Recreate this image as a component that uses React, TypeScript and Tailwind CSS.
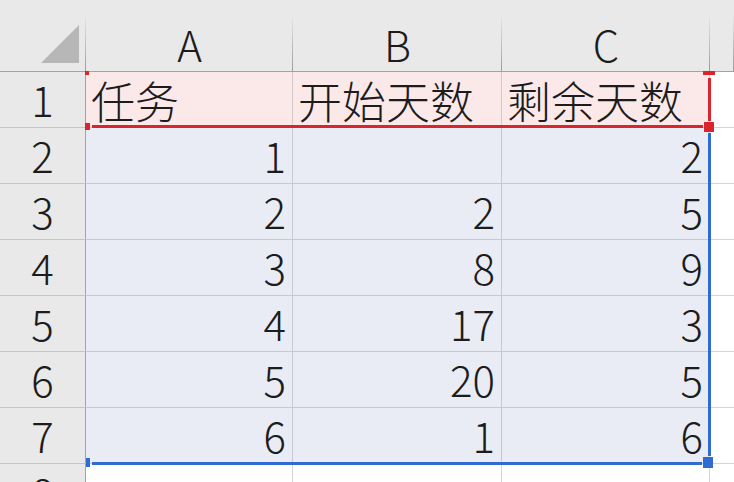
const font = '"Noto Sans CJK SC", "Noto Sans", sans-serif';

const letters = ["A", "B", "C"];
const titles = ["任务", "开始天数", "剩余天数"];
const rows: (number | null)[][] = [
  [1, null, 2],
  [2, 2, 5],
  [3, 8, 9],
  [4, 17, 3],
  [5, 20, 5],
  [6, 1, 6],
];

const HeadSep = () => (
  <span className="absolute right-0 top-[14px] bottom-0 w-px bg-gradient-to-b from-[#e9e9e9] to-[#9c9c9c]" />
);

export default function App() {
  return (
    <div
      className="relative w-[734px] h-[482px] overflow-hidden bg-white text-[#1c1c1c] font-light"
      style={{ fontFamily: font }}
    >
      <div className="grid grid-cols-[86px_207px_209px_208px_1fr] grid-rows-[72px_repeat(7,56px)_1fr] h-full">
        {/* corner */}
        <div className="relative flex items-end justify-end pr-[7px] pb-[8px] bg-[#e9e9e9] border-b border-[#a3a3a3]">
          <svg width="38" height="38" viewBox="0 0 38 38">
            <polygon points="0,38 38,38 38,0" fill="#b7b7b7" />
          </svg>
          <HeadSep />
        </div>
        {letters.map((l) => (
          <div
            key={l}
            className="relative flex items-end justify-center pb-[6px] bg-[#e9e9e9] border-b border-[#a3a3a3] text-[42px] leading-none"
          >
            {l}
            <HeadSep />
          </div>
        ))}
        <div className="relative bg-[#e9e9e9] border-b border-[#a3a3a3]">
          <HeadSep />
        </div>

        {/* row 1 */}
        <div className="flex items-end justify-center pb-[7px] bg-[#e9e9e9] border-r border-b border-r-[#a3a3a3] border-b-[#c4c4c4] text-[42px] leading-none">
          1
        </div>
        {titles.map((t) => (
          <div
            key={t}
            className="flex items-end pl-[5px] pb-[5px] bg-[#fbe9e9] border-r border-b border-[#d3c9c9] text-[44px] leading-none whitespace-nowrap"
          >
            {t}
          </div>
        ))}
        <div className="border-b border-[#d4d4d4]" />

        {/* rows 2-7 */}
        {rows.map((r, i) => (
          <div key={i} className="contents">
            <div className="flex items-end justify-center pb-[7px] bg-[#e9e9e9] border-r border-b border-r-[#a3a3a3] border-b-[#c4c4c4] text-[42px] leading-none">
              {i + 2}
            </div>
            {r.map((v, j) => (
              <div
                key={j}
                className="flex items-end justify-end pr-[6px] pb-[7px] bg-[#e9ecf4] border-r border-b border-[#c6c9cf] text-[42px] leading-none"
              >
                {v ?? ""}
              </div>
            ))}
            <div className="border-b border-[#d4d4d4]" />
          </div>
        ))}

        {/* row 8 */}
        <div className="flex items-start justify-center pt-[7px] bg-[#e9e9e9] border-r border-[#a3a3a3] text-[42px] leading-none">
          8
        </div>
        <div className="border-r border-[#d4d4d4]" />
        <div className="border-r border-[#d4d4d4]" />
        <div className="border-r border-[#d4d4d4]" />
        <div />
      </div>

      {/* red range A1:C1 */}
      <div className="absolute left-[85px] top-[71px] w-[4px] h-[4px] bg-[#d8262e]" />
      <div className="absolute left-[85px] top-[123px] w-[5px] h-[7px] bg-[#d8262e]" />
      <div className="absolute left-[92px] top-[125px] w-[611px] h-[3px] bg-[#d8262e]" />
      <div className="absolute left-[708px] top-[78px] w-[3px] h-[43px] bg-[#d8262e]" />
      <div className="absolute left-[703px] top-[71px] w-[12px] h-[4px] bg-[#d8262e]" />
      <div className="absolute left-[704px] top-[122px] w-[10px] h-[10px] bg-[#d8262e]" />

      {/* blue range A2:C7 */}
      <div className="absolute left-[708px] top-[133px] w-[3px] h-[323px] bg-[#2f6bd3]" />
      <div className="absolute left-[92px] top-[462px] w-[610px] h-[3px] bg-[#2f6bd3]" />
      <div className="absolute left-[703px] top-[457px] w-[10px] h-[11px] bg-[#2f6bd3]" />
      <div className="absolute left-[86px] top-[458px] w-[4px] h-[9px] bg-[#2f6bd3]" />
    </div>
  );
}
